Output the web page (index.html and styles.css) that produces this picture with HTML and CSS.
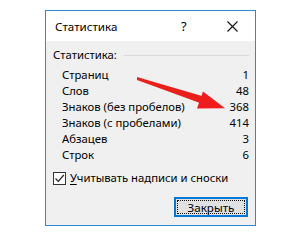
FILE: index.html
```html
<!DOCTYPE html>
<html lang="ru">
<head>
  <meta charset="UTF-8" />
  <title>Статистика</title>
  <link rel="stylesheet" href="styles.css">
</head>
<body>
  <div class="dialog">
    <div class="titlebar">
      <span class="title">Статистика</span>
      <span class="help">?</span>
      <span class="close">
        <svg width="11" height="11" viewBox="0 0 11 11"><path d="M0.5 0.5 L10.5 10.5 M10.5 0.5 L0.5 10.5" stroke="#111" stroke-width="1.1" fill="none"/></svg>
      </span>
    </div>

    <div class="content">
      <div class="group-head">
        <span>Статистика:</span>
        <span class="rule"></span>
      </div>

      <ul class="stats">
        <li><span>Страниц</span><span>1</span></li>
        <li><span>Слов</span><span>48</span></li>
        <li><span>Знаков (без пробелов)</span><span>368</span></li>
        <li><span>Знаков (с пробелами)</span><span>414</span></li>
        <li><span>Абзацев</span><span>3</span></li>
        <li><span>Строк</span><span>6</span></li>
      </ul>

      <label class="check">
        <span class="box">
          <svg width="11" height="11" viewBox="0 0 11 11"><path d="M1.5 5.5 L4.3 8.4 L9.8 2" stroke="#222" stroke-width="1.2" fill="none"/></svg>
        </span>
        <span><u>У</u>читывать надписи и сноски</span>
      </label>

      <div class="actions">
        <button type="button" class="btn"><span>Закрыть</span></button>
      </div>
    </div>

    <!-- красная стрелка поверх окна -->
    <svg class="arrow" width="92" height="40" viewBox="0 0 92 40">
      <path d="M0 1 L65 20 L63 27 L0 4 Z" fill="#e8201c"/>
      <path d="M66 15.5 L88 32.3 L60 32.5 Z" fill="#ee1c1c"/>
    </svg>
  </div>
</body>
</html>
```

FILE: styles.css
```css
* { margin: 0; padding: 0; box-sizing: border-box; }
body { background: #fff; font-family: 'Noto Sans', 'DejaVu Sans', sans-serif; font-size: 11.3px; color: #000; }

.dialog {
  position: relative; width: 211px; margin: 10px 0 0 45px;
  border: 1px solid #2a8ad8; background: #f0f0f0;
}

.titlebar {
  height: 30px; background: #fff; display: flex; align-items: center;
  padding-left: 9px; font-size: 11.6px;
}
.titlebar .title { flex: 1; }
.titlebar .help { width: 12px; margin-right: 34px; font-size: 13px; }
.titlebar .close { width: 11px; margin-right: 17px; display: flex; }

.content { padding: 6px 6px 8px 7px; }

.group-head { display: flex; align-items: center; height: 16px; line-height: 16px; }
.group-head .rule { flex: 1; height: 1px; background: #dadada; margin-left: 7px; }

.stats { list-style: none; margin-top: 4px; padding-left: 9px; }
.stats li { display: flex; justify-content: space-between; height: 16px; line-height: 16px; }

.check { display: flex; align-items: center; gap: 4px; margin-top: 7px; height: 16px; line-height: 16px; }
.check .box {
  width: 13px; height: 13px; border: 1px solid #333; background: #fff;
  display: flex; align-items: center; justify-content: center;
}
.check u { text-decoration-thickness: 1px; text-underline-offset: 2px; }

.actions { display: flex; justify-content: flex-end; margin-top: 11px; padding-right: 1px; }
.btn {
  width: 74px; height: 20px; border: 2px solid #0078d7; background: #e1e1e1;
  font: inherit; font-size: 11.6px; color: #000; padding: 1px; display: flex;
}
.btn span {
  flex: 1; border: 1px dotted #111; line-height: 14px; text-align: center;
}

.arrow { position: absolute; left: 91px; top: 65px; }
```
